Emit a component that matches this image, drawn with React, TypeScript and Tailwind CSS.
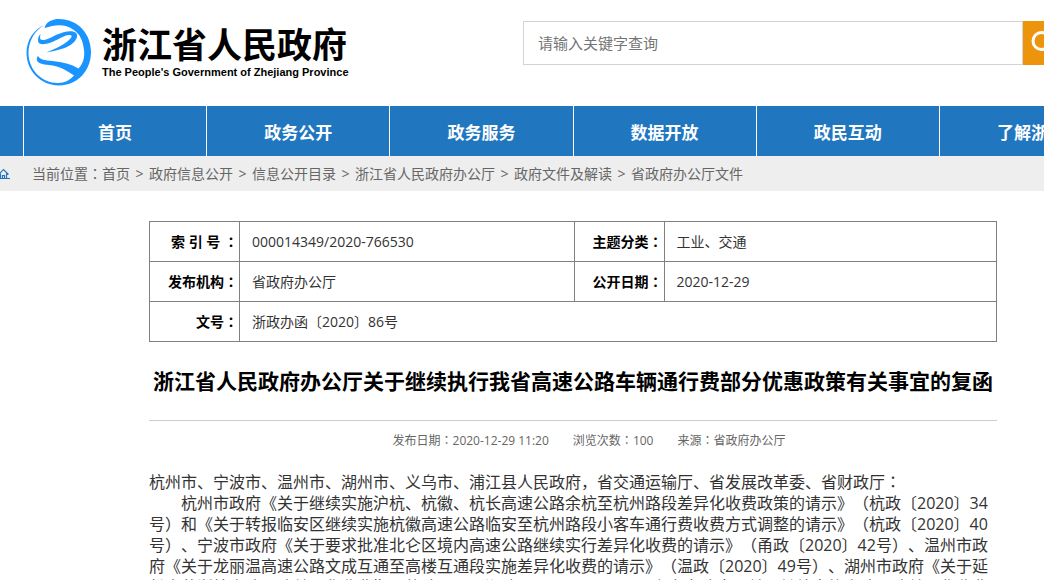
import React from "react";

const navItems = ["首页", "政务公开", "政务服务", "数据开放", "政民互动", "了解浙江"];

const crumbs = [
  "政府信息公开",
  "信息公开目录",
  "浙江省人民政府办公厅",
  "政府文件及解读",
  "省政府办公厅文件",
];

const paragraphs = [
  "杭州市、宁波市、温州市、湖州市、义乌市、浦江县人民政府，省交通运输厅、省发展改革委、省财政厅：",
  "　　杭州市政府《关于继续实施沪杭、杭徽、杭长高速公路余杭至杭州路段差异化收费政策的请示》（杭政〔2020〕34号）和《关于转报临安区继续实施杭徽高速公路临安至杭州路段小客车通行费收费方式调整的请示》（杭政〔2020〕40号）、宁波市政府《关于要求批准北仑区境内高速公路继续实行差异化收费的请示》（甬政〔2020〕42号）、温州市政府《关于龙丽温高速公路文成互通至高楼互通段实施差异化收费的请示》（温政〔2020〕49号）、湖州市政府《关于延长申苏浙皖高速公路差异化收费期限的请示》（湖政〔2020〕24号）、义乌市政府《关于继续实施高速公路差异化收费的请示》收悉。",
];

/** Sets full-width colons in the middle of their cell. */
function Cjk({ children }: { children: string }) {
  return (
    <>
      {children.split(/(：)/).map((part, i) =>
        part === "：" ? (
          <span key={i} className="font-['Noto_Sans_CJK_TC',sans-serif]">
            {part}
          </span>
        ) : (
          part
        ),
      )}
    </>
  );
}

function Emblem() {
  return (
    <svg viewBox="0 0 80 76" className="h-[76px] w-20 shrink-0" fill="#1a94ff" aria-hidden="true">
      <path d="M24.5 14C26 7.500 33 5 39 5C58 5 71 20 71 38C71 57 57 71.500 39 71.500C21 71.500 6.500 57 6.500 39C6.500 26 14 15.500 24 11C14.500 17 8.500 27 8.500 39C8.500 56 22 69 38 69C45 69 50 66 54 61.500C46 56 39 52 29 51C22 50.500 18 49 17 46.500C16.500 44.500 17 43 18 42C20 45.500 25 46.500 32 47C43 48 51 50 58.500 54.500C63 50 65 43 64 36C63 27 60 19.500 53 15.500C45 9.500 35 10.500 24.500 14Z" />
      <path d="M20.500 20C18 22.500 17.500 26 18.500 28.500C20 31 25 30.500 31 28.500C38 26 43 21.500 49 21C52 21 52.500 22.500 50 25C44 31 35 35 26 38.500C37 36.500 47 34.500 53 29C57 25.500 58.500 21 55.500 18.500C51 15.500 43 18 37 20.500C31 23.500 26 26.500 22 26C19.500 25.500 20 23 20.500 20Z" />
    </svg>
  );
}

function HomeIcon() {
  return (
    <svg viewBox="0 0 14 12" className="h-3 w-3.5 shrink-0" fill="none" stroke="#2177bf" strokeWidth="1.2" aria-hidden="true">
      <path d="M2.500 6.500L7.500 1.500L12.500 6.500M4.500 5.500V10.500M10.500 5.500V10.500M6.500 10.500V7.500H8.500V10.500M2 10.500H14" />
    </svg>
  );
}

function Label({ children }: { children: string }) {
  return (
    <th scope="row" className="border border-[#808080] pr-px text-right font-bold whitespace-pre text-black">
      <Cjk>{children}</Cjk>
    </th>
  );
}

function Value({ children, colSpan }: { children: string; colSpan?: number }) {
  return (
    <td colSpan={colSpan} className="border border-[#808080] pl-3">
      {children}
    </td>
  );
}

export default function App() {
  return (
    <div className="h-screen overflow-hidden bg-white font-['Open_Sans','Noto_Sans_CJK_SC',sans-serif] text-sm text-[#333] [text-spacing-trim:space-all]">
      <header className="flex h-[106px] items-start">
        <a href="#" className="flex shrink-0 pt-3.5 pl-5 text-black">
          <Emblem />
          <span className="flex flex-col pt-2 pl-0.5">
            <span className="font-['Noto_Sans_CJK_SC',sans-serif] text-[35px] leading-[42px] font-bold whitespace-nowrap">
              浙江省人民政府
            </span>
            <span className="font-['Liberation_Sans',sans-serif] text-[11px] leading-4 font-bold whitespace-nowrap">
              The People's Government of Zhejiang Province
            </span>
          </span>
        </a>
        <form className="mt-[21px] ml-auto flex h-11 w-[521px] shrink-0 overflow-hidden" role="search">
          <input
            type="text"
            aria-label="请输入关键字查询"
            placeholder="请输入关键字查询"
            className="h-11 w-[500px] shrink-0 border border-[#d3d3d3] px-3.5 text-[15px] outline-none placeholder:text-[#757575]"
          />
          <button type="button" aria-label="搜索" className="flex h-11 w-[60px] shrink-0 items-center bg-[#ec950c] pl-2">
            <svg viewBox="0 0 28 28" className="h-7 w-7" fill="none" stroke="#fff" strokeWidth="3" aria-hidden="true">
              <circle cx="10.500" cy="12" r="8.500" />
              <path d="M17 18.500L25 27" />
            </svg>
          </button>
        </form>
      </header>

      <nav className="overflow-hidden bg-[#2177bf] pl-[23px]">
        <div className="grid w-[1099px] grid-cols-6">
          {navItems.map((item) => (
            <a
              key={item}
              href="#"
              className="flex h-[50px] items-center justify-center border-l border-white pt-1 text-[17px] font-bold text-white"
            >
              {item}
            </a>
          ))}
        </div>
      </nav>

      <div className="flex h-[35px] items-center overflow-hidden bg-[#eee] text-[#666]">
        <div className="-ml-1 flex w-9 shrink-0">
          <HomeIcon />
        </div>
        <div className="flex items-center gap-[5px] whitespace-nowrap">
          <span>
            <Cjk>当前位置：</Cjk>
            <a href="#">首页</a>
          </span>
          {crumbs.map((crumb) => (
            <React.Fragment key={crumb}>
              <span className="w-[9px] text-center">&gt;</span>
              <a href="#">{crumb}</a>
            </React.Fragment>
          ))}
        </div>
      </div>

      <main className="pt-[30px] pr-[47px] pl-[149px]">
        <table className="w-full table-fixed border-collapse">
          <colgroup>
            <col className="w-[90px]" />
            <col className="w-[39.5%]" />
            <col className="w-[90px]" />
            <col />
          </colgroup>
          <tbody>
            <tr className="h-10">
              <Label>索 引 号 ：</Label>
              <Value>000014349/2020-766530</Value>
              <Label>主题分类：</Label>
              <Value>工业、交通</Value>
            </tr>
            <tr className="h-10">
              <Label>发布机构：</Label>
              <Value>省政府办公厅</Value>
              <Label>公开日期：</Label>
              <Value>2020-12-29</Value>
            </tr>
            <tr className="h-10">
              <Label>文号：</Label>
              <Value colSpan={3}>浙政办函〔2020〕86号</Value>
            </tr>
          </tbody>
        </table>

        <h1 className="border-b border-[#ccc] pt-6 pb-6 text-center text-[21px] leading-[30px] font-bold text-black">
          浙江省人民政府办公厅关于继续执行我省高速公路车辆通行费部分优惠政策有关事宜的复函
        </h1>

        <div className="flex h-[38px] items-center justify-center gap-6 pl-8 text-xs text-[#666]">
          <span>
            <Cjk>发布日期：2020-12-29 11:20</Cjk>
          </span>
          <span>
            <Cjk>浏览次数：100</Cjk>
          </span>
          <span>
            <Cjk>来源：省政府办公厅</Cjk>
          </span>
        </div>

        <article className="pt-3 text-base leading-[21px]">
          {paragraphs.map((text, i) => (
            <p key={i}>
              <Cjk>{text}</Cjk>
            </p>
          ))}
        </article>
      </main>
    </div>
  );
}
